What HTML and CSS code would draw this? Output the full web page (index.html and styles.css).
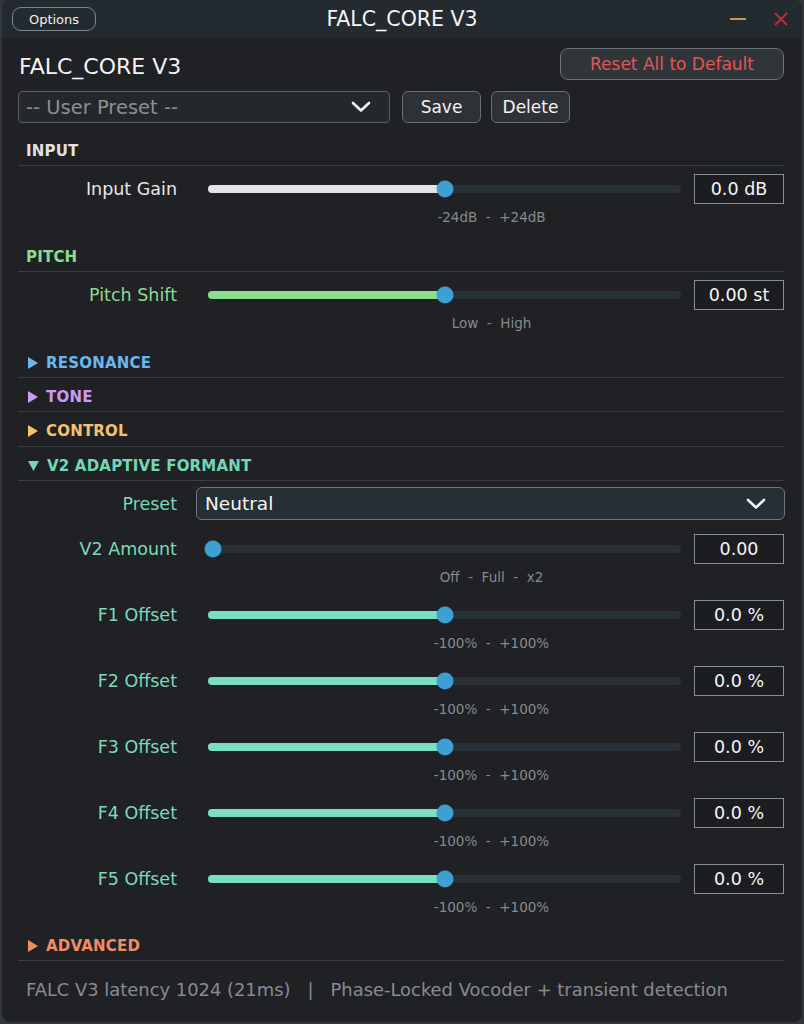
FILE: index.html
```html
<!DOCTYPE html>
<html lang="en">
<head>
    <meta charset="UTF-8">
    <title>FALC_CORE V3</title>
    <link rel="stylesheet" href="styles.css">
</head>
<body>

<div class="window">

    <div class="titlebar">
        <div class="titlebar-left"><button class="options-btn">Options</button></div>
        <div class="titlebar-title">FALC_CORE V3</div>
        <div class="titlebar-right">
            <span class="win-min"></span>
            <svg class="win-close" width="14" height="14" viewBox="0 0 14 14"><path d="M1 1 L13 13 M13 1 L1 13" stroke="#c0302f" stroke-width="1.8" fill="none"/></svg>
        </div>
    </div>

    <div class="content">

        <div class="top-row">
            <h1 class="plugin-name">FALC_CORE V3</h1>
            <button class="reset-btn">Reset All to Default</button>
        </div>

        <div class="preset-row">
            <div class="select user-preset">
                <span>-- User Preset --</span>
                <svg class="chevron" width="20" height="12" viewBox="0 0 20 12"><path d="M2 2 L10 9.5 L18 2" stroke="#f2f2f2" stroke-width="2.6" fill="none" stroke-linecap="round" stroke-linejoin="round"/></svg>
            </div>
            <button class="btn">Save</button>
            <button class="btn">Delete</button>
        </div>

        <div class="section">
            <div class="section-head head-input">INPUT</div>
            <div class="section-body">
                <div class="param">
                    <div class="param-row">
                        <span class="param-label lbl-input">Input Gain</span>
                        <div class="slider fill-input" style="--v:0.5"><div class="fill"></div><span class="thumb"></span></div>
                        <div class="value-box">0.0 dB</div>
                    </div>
                    <div class="range">-24dB &nbsp;- &nbsp;+24dB</div>
                </div>
            </div>
        </div>

        <div class="section">
            <div class="section-head head-pitch">PITCH</div>
            <div class="section-body">
                <div class="param">
                    <div class="param-row">
                        <span class="param-label lbl-pitch">Pitch Shift</span>
                        <div class="slider fill-pitch" style="--v:0.5"><div class="fill"></div><span class="thumb"></span></div>
                        <div class="value-box">0.00 st</div>
                    </div>
                    <div class="range">Low &nbsp;- &nbsp;High</div>
                </div>
            </div>
        </div>

        <div class="section-head head-resonance"><svg class="arrow" width="10" height="12" viewBox="0 0 10 12"><path d="M0 0 L10 6 L0 12 Z"/></svg>RESONANCE</div>
        <div class="section-head head-tone"><svg class="arrow" width="10" height="12" viewBox="0 0 10 12"><path d="M0 0 L10 6 L0 12 Z"/></svg>TONE</div>
        <div class="section-head head-control"><svg class="arrow" width="10" height="12" viewBox="0 0 10 12"><path d="M0 0 L10 6 L0 12 Z"/></svg>CONTROL</div>

        <div class="section">
            <div class="section-head head-formant"><svg class="arrow" width="11" height="10" viewBox="0 0 11 10"><path d="M0 0 L11 0 L5.5 10 Z"/></svg>V2 ADAPTIVE FORMANT</div>
            <div class="section-body formant-body">
                <div class="select-row">
                    <span class="param-label lbl-formant">Preset</span>
                    <div class="select formant-preset">
                        <span>Neutral</span>
                        <svg class="chevron" width="20" height="12" viewBox="0 0 20 12"><path d="M2 2 L10 9.5 L18 2" stroke="#f2f2f2" stroke-width="2.6" fill="none" stroke-linecap="round" stroke-linejoin="round"/></svg>
                    </div>
                </div>
                <div class="param">
                    <div class="param-row">
                        <span class="param-label lbl-formant">V2 Amount</span>
                        <div class="slider fill-formant" style="--v:0"><div class="fill"></div><span class="thumb"></span></div>
                        <div class="value-box">0.00</div>
                    </div>
                    <div class="range">Off &nbsp;- &nbsp;Full &nbsp;- &nbsp;x2</div>
                </div>
                <div class="param">
                    <div class="param-row">
                        <span class="param-label lbl-formant">F1 Offset</span>
                        <div class="slider fill-formant" style="--v:0.5"><div class="fill"></div><span class="thumb"></span></div>
                        <div class="value-box">0.0 %</div>
                    </div>
                    <div class="range">-100% &nbsp;- &nbsp;+100%</div>
                </div>
                <div class="param">
                    <div class="param-row">
                        <span class="param-label lbl-formant">F2 Offset</span>
                        <div class="slider fill-formant" style="--v:0.5"><div class="fill"></div><span class="thumb"></span></div>
                        <div class="value-box">0.0 %</div>
                    </div>
                    <div class="range">-100% &nbsp;- &nbsp;+100%</div>
                </div>
                <div class="param">
                    <div class="param-row">
                        <span class="param-label lbl-formant">F3 Offset</span>
                        <div class="slider fill-formant" style="--v:0.5"><div class="fill"></div><span class="thumb"></span></div>
                        <div class="value-box">0.0 %</div>
                    </div>
                    <div class="range">-100% &nbsp;- &nbsp;+100%</div>
                </div>
                <div class="param">
                    <div class="param-row">
                        <span class="param-label lbl-formant">F4 Offset</span>
                        <div class="slider fill-formant" style="--v:0.5"><div class="fill"></div><span class="thumb"></span></div>
                        <div class="value-box">0.0 %</div>
                    </div>
                    <div class="range">-100% &nbsp;- &nbsp;+100%</div>
                </div>
                <div class="param">
                    <div class="param-row">
                        <span class="param-label lbl-formant">F5 Offset</span>
                        <div class="slider fill-formant" style="--v:0.5"><div class="fill"></div><span class="thumb"></span></div>
                        <div class="value-box">0.0 %</div>
                    </div>
                    <div class="range">-100% &nbsp;- &nbsp;+100%</div>
                </div>
            </div>
        </div>

        <div class="section-head head-advanced"><svg class="arrow" width="10" height="12" viewBox="0 0 10 12"><path d="M0 0 L10 6 L0 12 Z"/></svg>ADVANCED</div>

        <div class="footer">FALC V3 latency 1024 (21ms) &nbsp;&nbsp;| &nbsp;&nbsp;Phase-Locked Vocoder + transient detection</div>

    </div>
</div>

</body>
</html>
```

FILE: styles.css
```css
* { box-sizing: border-box; margin: 0; padding: 0; font-family: "DejaVu Sans", Verdana, sans-serif; }
body {
    background: #33373b;
    width: 804px;
    height: 1024px;
    overflow: hidden;
}
button { font-family: "DejaVu Sans", Verdana, sans-serif; cursor: pointer; }

.window {
    width: 800px;
    height: 1022px;
    margin-left: 2px;
    background: #1f2125;
    border-radius: 8px;
    overflow: hidden;
}

/* title bar */
.titlebar {
    height: 38px;
    background: #232a30;
    display: grid;
    grid-template-columns: 1fr auto 1fr;
    align-items: center;
    padding: 0 14px 0 10px;
}
.options-btn {
    width: 84px;
    height: 24px;
    background: #232b31;
    border: 1.5px solid #7d868c;
    border-radius: 9px;
    color: #f0f0f0;
    font-size: 13px;
}
.titlebar-title {
    color: #f4f4f4;
    font-size: 20.5px;
    padding-left: 4px;
}
.titlebar-right {
    display: flex;
    justify-content: flex-end;
    align-items: center;
    gap: 28px;
}
.win-min {
    width: 16px;
    height: 2px;
    background: #c29e36;
}

/* content */
.content {
    padding: 0 17px 0 16px;
}
.top-row {
    display: flex;
    justify-content: space-between;
    align-items: center;
    margin-top: 10px;
    height: 32px;
}
.plugin-name {
    font-size: 22px;
    font-weight: normal;
    color: #f4f4f4;
    padding-left: 1px;
    margin-top: 4px;
}
.reset-btn {
    width: 224px;
    height: 32px;
    margin-right: 1px;
    background: #30353a;
    border: 1.5px solid #6c7277;
    border-radius: 8px;
    color: #e05656;
    font-size: 17px;
}
.preset-row {
    display: flex;
    align-items: center;
    gap: 12px;
    margin-top: 11px;
    height: 32px;
}
.preset-row .btn + .btn { margin-left: -2px; }
.select {
    display: flex;
    justify-content: space-between;
    align-items: center;
    height: 32px;
}
.user-preset {
    width: 372px;
    padding: 0 18px 0 7px;
    background: #24282d;
    border: 1.5px solid #5c6166;
    border-radius: 4px;
    color: #8b9095;
    font-size: 19.5px;
}
.btn {
    width: 79px;
    height: 32px;
    background: #2e3237;
    border: 1.5px solid #6a7075;
    border-radius: 6px;
    color: #f2f2f2;
    font-size: 17px;
}

/* sections */
.section-head {
    display: flex;
    align-items: center;
    height: 34px;
    padding-top: 4px;
    padding-left: 8px;
    border-bottom: 1px solid #3a3e43;
    font-size: 15px;
    font-weight: bold;
    letter-spacing: 0.2px;
}
.section-head .arrow {
    margin: 0 8px 0 2px;
    fill: currentColor;
}
.preset-row + .section { margin-top: 9px; }
.head-input { color: #e2e2e2; }
.head-pitch { color: #8ed98f; }
.head-resonance { color: #6ab7ee; }
.head-tone { color: #c89cf0; }
.head-control { color: #f3c26c; height: 35px; }
.head-formant { color: #71d8b6; }
.head-advanced { color: #f28c62; }

.section-body {
    padding: 8px 0 13px;
}
.formant-body {
    padding-top: 6px;
    padding-bottom: 12px;
}
.param + .param { margin-top: 15px; }
.select-row + .param { margin-top: 14px; }
.param-row {
    display: flex;
    align-items: center;
    height: 30px;
}
.param-label {
    width: 159px;
    flex: none;
    text-align: right;
    font-size: 17.5px;
}
.lbl-input { color: #e8e8e8; }
.lbl-pitch { color: #8ed98f; }
.lbl-formant { color: #7bd9b9; }

.slider {
    position: relative;
    width: 473px;
    height: 8px;
    margin-left: 31px;
    border-radius: 4px;
    background: #283137;
}
.slider .fill {
    height: 8px;
    border-radius: 4px;
    width: calc(var(--v) * 100%);
}
.fill-input .fill { background: #e3e3e3; }
.fill-pitch .fill { background: #8ddd90; }
.fill-formant .fill { background: #79dfc0; }
.slider .thumb {
    position: absolute;
    top: 50%;
    left: calc(5px + var(--v) * (100% - 10px));
    width: 17px;
    height: 17px;
    border-radius: 50%;
    background: #3d9fd4;
    transform: translate(-50%, -50%);
}
.value-box {
    width: 90px;
    height: 30px;
    margin-left: 13px;
    flex: none;
    border: 1.5px solid #8a8f94;
    background: #1b1d21;
    color: #f6f6f6;
    font-size: 17.5px;
    display: flex;
    align-items: center;
    justify-content: center;
}
.range {
    margin: 5px 0 0 180px;
    line-height: 16px;
    text-align: center;
    font-size: 13.5px;
    color: #868b90;
}

.select-row {
    display: flex;
    align-items: center;
    height: 33px;
}
.formant-preset {
    flex: 1;
    height: 33px;
    margin-left: 19px;
    padding: 0 18px 0 8px;
    background: #262f35;
    border: 1.5px solid #6f777c;
    border-radius: 6px;
    color: #f6f6f6;
    font-size: 18.5px;
}

.footer {
    padding: 18px 0 0 8px;
    font-size: 17.9px;
    color: #878c91;
    white-space: pre;
}
```
